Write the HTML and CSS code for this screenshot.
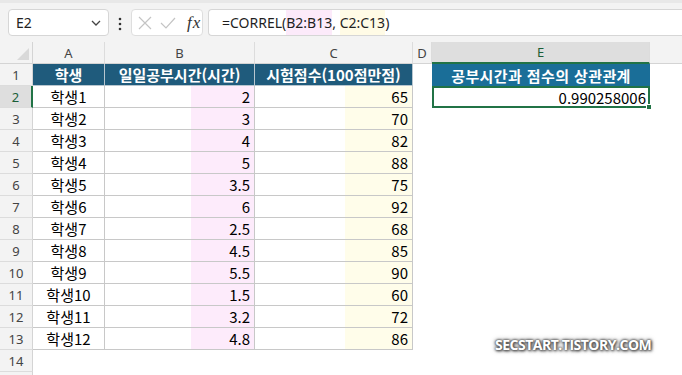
FILE: index.html
```html
<!DOCTYPE html>
<html lang="ko">
<head>
    <meta charset="UTF-8">
    <title>CORREL</title>
    <link rel="stylesheet" href="styles.css">
</head>
<body>
    <div class="formula-bar">
        <div class="name-box">
            <span>E2</span>
            <svg width="12" height="8" viewBox="0 0 12 8"><path d="M2 2 L6 6 L10 2" fill="none" stroke="#444" stroke-width="1.3"/></svg>
        </div>
        <div class="dots">
            <svg width="4" height="14" viewBox="0 0 4 14"><circle cx="2" cy="2" r="1.3" fill="#333"/><circle cx="2" cy="7" r="1.3" fill="#333"/><circle cx="2" cy="12" r="1.3" fill="#333"/></svg>
        </div>
        <div class="fx-box">
            <svg width="14" height="14" viewBox="0 0 14 14"><path d="M1 1 L13 13 M13 1 L1 13" stroke="#c4c4c4" stroke-width="1.2"/></svg>
            <svg width="16" height="14" viewBox="0 0 16 14"><path d="M1 7 L6 12 L15 2" fill="none" stroke="#c4c4c4" stroke-width="1.2"/></svg>
            <span class="fx">fx</span>
        </div>
        <div class="formula-input">
            <span>=CORREL(</span><span class="ref-b">B2:B13</span><span>, </span><span class="ref-c">C2:C13</span><span>)</span>
        </div>
    </div>

    <div class="sheet">
        <div class="corner"></div>
        <div class="ch">A</div>
        <div class="ch">B</div>
        <div class="ch">C</div>
        <div class="ch">D</div>
        <div class="ch selected">E</div>
        <div class="ch last"></div>

        <div class="rh">1</div>
        <div class="c hd">학생</div>
        <div class="c hd">일일공부시간(시간)</div>
        <div class="c hd">시험점수(100점만점)</div>
        <div class="blank"></div>
        <div class="c hd hd-e">공부시간과 점수의 상관관계</div>
        <div class="blank"></div>

        <div class="rh selected">2</div>
        <div class="c">학생1</div>
        <div class="c num ref-b-col">2</div>
        <div class="c num ref-c-col">65</div>
        <div class="blank"></div>
        <div class="c num active">0.990258006<span class="handle"></span></div>
        <div class="blank"></div>

        <div class="rh">3</div>
        <div class="c">학생2</div>
        <div class="c num ref-b-col">3</div>
        <div class="c num ref-c-col">70</div>
        <div class="blank wide"></div>

        <div class="rh">4</div>
        <div class="c">학생3</div>
        <div class="c num ref-b-col">4</div>
        <div class="c num ref-c-col">82</div>
        <div class="blank wide"></div>

        <div class="rh">5</div>
        <div class="c">학생4</div>
        <div class="c num ref-b-col">5</div>
        <div class="c num ref-c-col">88</div>
        <div class="blank wide"></div>

        <div class="rh">6</div>
        <div class="c">학생5</div>
        <div class="c num ref-b-col">3.5</div>
        <div class="c num ref-c-col">75</div>
        <div class="blank wide"></div>

        <div class="rh">7</div>
        <div class="c">학생6</div>
        <div class="c num ref-b-col">6</div>
        <div class="c num ref-c-col">92</div>
        <div class="blank wide"></div>

        <div class="rh">8</div>
        <div class="c">학생7</div>
        <div class="c num ref-b-col">2.5</div>
        <div class="c num ref-c-col">68</div>
        <div class="blank wide"></div>

        <div class="rh">9</div>
        <div class="c">학생8</div>
        <div class="c num ref-b-col">4.5</div>
        <div class="c num ref-c-col">85</div>
        <div class="blank wide"></div>

        <div class="rh">10</div>
        <div class="c">학생9</div>
        <div class="c num ref-b-col">5.5</div>
        <div class="c num ref-c-col">90</div>
        <div class="blank wide"></div>

        <div class="rh">11</div>
        <div class="c">학생10</div>
        <div class="c num ref-b-col">1.5</div>
        <div class="c num ref-c-col">60</div>
        <div class="blank wide"></div>

        <div class="rh">12</div>
        <div class="c">학생11</div>
        <div class="c num ref-b-col">3.2</div>
        <div class="c num ref-c-col">72</div>
        <div class="blank wide"></div>

        <div class="rh">13</div>
        <div class="c">학생12</div>
        <div class="c num ref-b-col">4.8</div>
        <div class="c num ref-c-col">86</div>
        <div class="blank wide"></div>

        <div class="rh">14</div>
        <div class="blank full"></div>

        <div class="rh"></div>
        <div class="blank full"></div>
    </div>

    <div class="watermark">SECSTART.TISTORY.COM</div>
</body>
</html>
```

FILE: styles.css
```css
* {
    box-sizing: border-box;
}

html {
    overflow: hidden;
}

body {
    margin: 0;
    background: #fff;
    font-family: "Noto Sans", "Noto Sans CJK KR", sans-serif;
    color: #000;
    overflow: hidden;
    position: relative;
    width: 682px;
    height: 375px;
}

/* formula bar */
.formula-bar {
    display: flex;
    align-items: center;
    height: 42px;
    padding: 0 0 0 8px;
    background: #f3f3f3;
    border-top: 3px solid #e8e8e8;
}

.name-box {
    width: 101px;
    height: 27px;
    background: #fff;
    border: 1px solid #d6d6d6;
    border-radius: 4px;
    display: flex;
    align-items: center;
    justify-content: space-between;
    padding: 0 6px 0 7px;
    font-size: 14px;
    color: #222;
}

.dots {
    width: 22px;
    display: flex;
    justify-content: center;
    padding-top: 2px;
}

.fx-box {
    width: 72px;
    height: 27px;
    background: #fff;
    border: 1px solid #dedede;
    border-radius: 4px;
    display: flex;
    align-items: center;
    gap: 8px;
    padding-left: 6px;
}

.fx {
    font-family: "Liberation Serif", serif;
    font-style: italic;
    font-size: 17px;
    color: #333;
    margin-left: 3px;
    letter-spacing: 1px;
}

.formula-input {
    flex: 1;
    height: 27px;
    margin-left: 5px;
    background: #fff;
    border: 1px solid #d6d6d6;
    border-right: none;
    border-radius: 4px 0 0 4px;
    display: flex;
    align-items: stretch;
    padding-left: 13px;
    font-size: 14px;
    color: #1f1f1f;
    white-space: pre;
}

.formula-input span {
    display: flex;
    align-items: center;
}

.ref-b {
    background: #fceafa;
}

.ref-c {
    background: #fffbe6;
}

/* sheet grid */
.sheet {
    display: grid;
    grid-template-columns: 33px 72px 150px 158px 19px 218px 1fr;
    grid-auto-rows: 22px;
    height: 333px;
    overflow: hidden;
    font-family: "Noto Sans CJK KR", "Noto Sans", sans-serif;
    font-size: 15px;
}

.corner {
    background: #f3f3f3;
    border-right: 1px solid #d4d4d4;
    border-bottom: 1px solid #d4d4d4;
    position: relative;
}

.corner::after {
    content: "";
    position: absolute;
    right: 3px;
    bottom: 3px;
    border-left: 12px solid transparent;
    border-bottom: 12px solid #d9d9d9;
}

.ch {
    background: #f3f3f3;
    border-right: 1px solid #dcdcdc;
    border-bottom: 1px solid #d4d4d4;
    display: flex;
    align-items: center;
    justify-content: center;
    font-family: "Noto Sans", sans-serif;
    font-size: 13px;
    color: #444;
}

.ch.selected {
    background: #dedede;
    border-bottom: 2px solid #217346;
    color: #1b5e38;
}

.ch.last {
    border-right: none;
}

.rh {
    background: #f3f3f3;
    border-right: 1px solid #d4d4d4;
    border-bottom: 1px solid #dcdcdc;
    display: flex;
    align-items: center;
    justify-content: center;
    font-family: "Noto Sans", sans-serif;
    font-size: 13px;
    color: #444;
}

.rh.selected {
    background: #dedede;
    border-right: 2px solid #217346;
    color: #1b5e38;
}

.c {
    border-right: 1px solid #c8c8c8;
    border-bottom: 1px solid #c8c8c8;
    display: flex;
    align-items: center;
    justify-content: center;
    white-space: nowrap;
    line-height: 1;
}

.c.hd {
    background: #1f5b7c;
    color: #fff;
    font-weight: bold;
    border-right-color: #b8c6cf;
    border-bottom-color: #b8c6cf;
}

.c.hd-e {
    background: #1a6e98;
    letter-spacing: 0.4px;
    border-right: none;
    border-bottom: none;
}

.c.num {
    justify-content: flex-end;
    padding-right: 4px;
}

.ref-b-col {
    background: linear-gradient(to right, #fff 86px, #fdebfb 86px);
}

.ref-c-col {
    background: linear-gradient(to right, #fff 90px, #fffdea 90px);
}

.c.active {
    border: 2px solid #217346;
    padding-right: 2px;
    position: relative;
}

.handle {
    position: absolute;
    right: -4px;
    bottom: -4px;
    width: 6px;
    height: 6px;
    background: #217346;
    border: 1px solid #fff;
}

.blank.wide {
    grid-column: span 3;
}

.blank.full {
    grid-column: span 6;
}

.watermark {
    position: absolute;
    left: 495px;
    top: 335px;
    font-family: "Open Sans", sans-serif;
    font-weight: bold;
    font-size: 14px;
    letter-spacing: -0.5px;
    color: #fff;
    text-shadow: 0 0 2px #555, 0 0 3px #555, 1px 1px 3px #444, 0 0 5px #777;
}
```
